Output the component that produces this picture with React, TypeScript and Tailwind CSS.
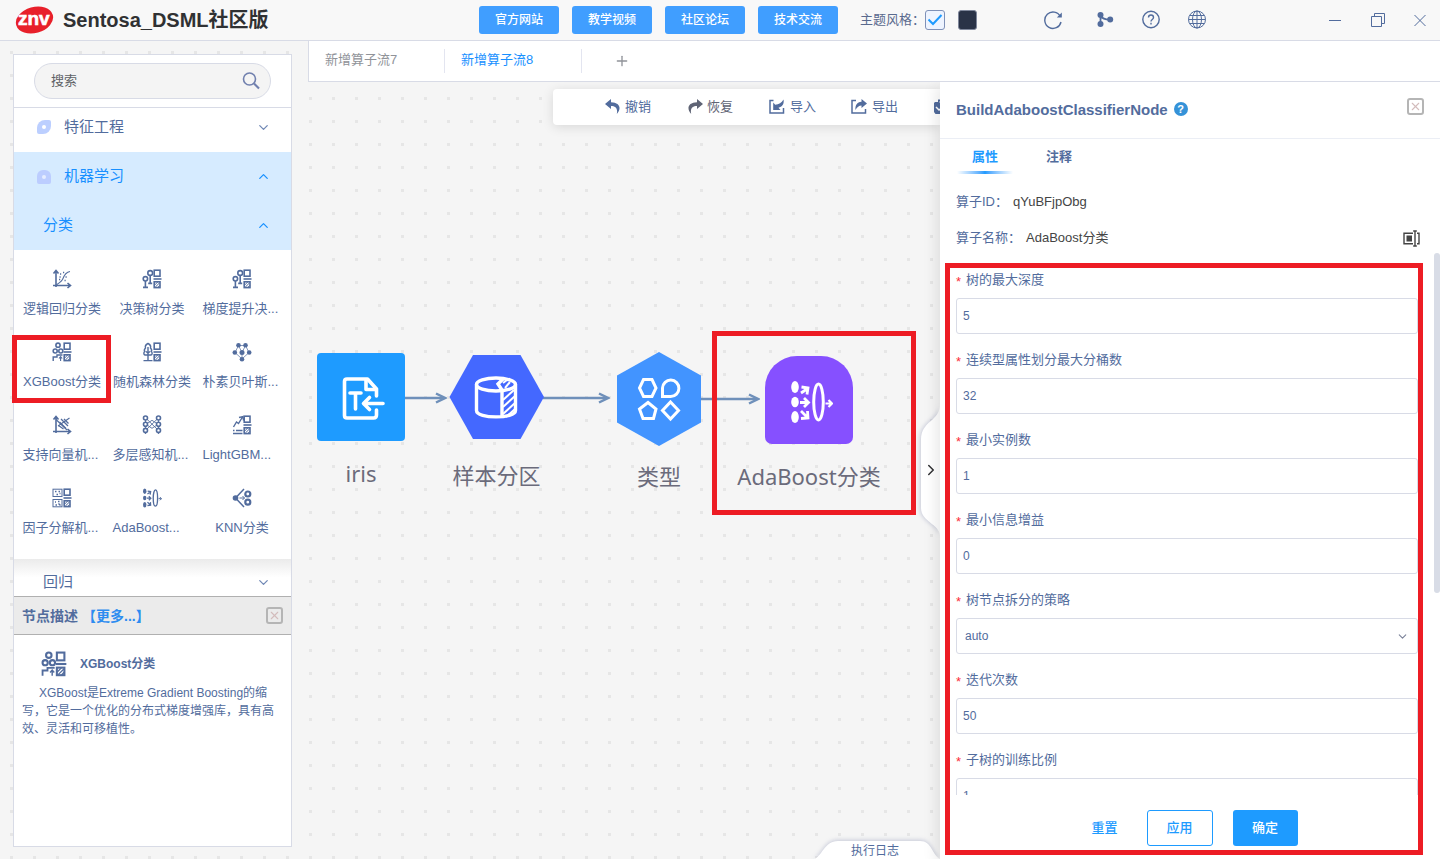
import type { ReactNode } from "react"
import { ChevronDown, ChevronRight, ChevronUp, Plus, X } from "lucide-react"

type IconProps = { className?: string }

const Svg = ({ className = "w-5 h-5", children }: { className?: string; children: ReactNode }) => (
  <svg viewBox="0 0 20 20" className={className} fill="none" stroke="currentColor" strokeWidth="1.4">
    {children}
  </svg>
)

// square, bar and hatched square used on the right side of several icons
const SplitMark = () => (
  <>
    <rect x="12.2" y="1.2" width="5.8" height="6" strokeWidth="1.6" />
    <path d="M11.5 10H19.500" strokeWidth="1.6" />
    <rect x="12.2" y="12.8" width="5.8" height="5.8" strokeWidth="1.6" />
    <path d="M12.5 16.2l3.2-3.2M13.2 18.2l4.4-4.4M15.8 18.4l2-2" strokeWidth="1" />
  </>
)

const LogisticIcon = ({ className }: IconProps) => (
  <Svg className={className}>
    <path d="M4 18V2M1.500 4.500L4 1.500l2.500 3M1 16.500h17M15.500 14l3 2.500-3 2.500" strokeWidth="1.6" />
    <path d="M4 16.500c3-3 5-3 6.500-6 1.500-4 3-7.500 7.500-8" strokeWidth="1.1" />
    <path d="M8 5h1.200M11 3.500h1.200M7.500 8h1.200M7 10.500h1.200M13.500 8h1.200M12.500 11.500h1.200" />
  </Svg>
)

const TreeIcon = ({ className }: IconProps) => (
  <Svg className={className}>
    <circle cx="3.4" cy="9.8" r="2.2" strokeWidth="1.6" />
    <circle cx="8.2" cy="4" r="2.4" strokeWidth="1.6" />
    <path d="M3.4 12v6M1 18.4h5M8.2 6.4v8M6.2 14.4h4" strokeWidth="1.6" />
    <SplitMark />
  </Svg>
)

const XgbIcon = ({ className }: IconProps) => (
  <Svg className={className}>
    <circle cx="6" cy="3.2" r="2.1" strokeWidth="1.6" />
    <circle cx="3.2" cy="9" r="2" strokeWidth="1.6" />
    <circle cx="8.8" cy="9" r="2" strokeWidth="1.6" />
    <path d="M1.2 19v-4H5v-2h5.5" />
    <path d="M8.6 19v-4M7 16.500l1.600-1.800 1.600 1.800" strokeWidth="1.1" />
    <SplitMark />
  </Svg>
)

const ForestIcon = ({ className }: IconProps) => (
  <Svg className={className}>
    <path d="M6 1.500C4 2.500 3 4.500 3.500 6 2.500 7 2 8.500 2.800 9.500 1.500 10.500 1.500 12.500 3 13h6c1.500-.5 1.500-2.500.2-3.500C10 8.500 9.500 7 8.500 6 9 4.500 8 2.500 6 1.500z" />
    <path d="M6 5v13.500M1.500 18.600h9M4 9.500l2 1.500 2-1.500" />
    <SplitMark />
  </Svg>
)

const BayesIcon = ({ className }: IconProps) => (
  <Svg className={className}>
    <path d="M6.5 3.5h7M6.5 3.5l3.5 7 3.5-7M10 10.5V17M6.5 3.5L3 10.5l7 6.5 7-6.5-3.500-7" strokeWidth="0.7" />
    <g fill="currentColor" stroke="none">
      <circle cx="6.5" cy="3.2" r="2.3" />
      <circle cx="13.5" cy="3.2" r="2.3" />
      <circle cx="2.8" cy="10.5" r="2.3" />
      <circle cx="10" cy="10.5" r="2.5" />
      <circle cx="17.2" cy="10.5" r="2.3" />
      <circle cx="10" cy="17.2" r="2.3" />
    </g>
  </Svg>
)

const SvmIcon = ({ className }: IconProps) => (
  <Svg className={className}>
    <path d="M4 18V2M1.500 4.500L4 1.500l2.500 3M1 16.500h17M15.500 14l3 2.500-3 2.500" strokeWidth="1.6" />
    <path d="M4 4.500L15 15M6 11l11.500-8" strokeWidth="1.1" />
    <path d="M9 4l7 7M7.500 7l6.500 6.500M12 4l4.500 4.500M6.500 10.500l5 3.500" strokeWidth="1.3" />
  </Svg>
)

const PerceptronIcon = ({ className }: IconProps) => (
  <Svg className={className}>
    <path d="M4 3.300L16 15M4 15L16 3.300M4 9.300l6-4 6 4-6 4zM3.500 3v16M16.500 3v16" strokeWidth="0.9" />
    <g fill="white" strokeWidth="1.6">
      <circle cx="3.5" cy="3" r="2" />
      <circle cx="3.5" cy="9.2" r="2" />
      <circle cx="3.5" cy="15.4" r="2" />
      <circle cx="16.5" cy="3" r="2" />
      <circle cx="16.5" cy="9.2" r="2" />
      <circle cx="16.5" cy="15.4" r="2" />
    </g>
  </Svg>
)

const LightGbmIcon = ({ className }: IconProps) => (
  <Svg className={className}>
    <path d="M1.500 12l3-5 2 1.500L10.500 2M7 2.500L11 1.500l.5 4M1 15.500h1.500M4 15.500h6.500M1 18.500h9.500" />
    <SplitMark />
  </Svg>
)

const FactorIcon = ({ className }: IconProps) => (
  <Svg className={className}>
    <rect x="1" y="1.2" width="9" height="7.3" strokeWidth="1" />
    <rect x="1" y="11.5" width="9" height="7.3" strokeWidth="1" />
    <path d="M3 3.500h1.500M6.500 3.500H8M4.500 6.500H6M7.500 5.500H8.500M3 14H4M6 13.500h1.500M3.500 17H5M6.500 15.500L8.500 17.500" />
    <SplitMark />
  </Svg>
)

const AdaIcon = ({ className }: IconProps) => (
  <svg viewBox="0 0 44 44" className={className ?? "w-5 h-5"} fill="none" stroke="currentColor" strokeWidth="2.8">
    <g fill="currentColor" stroke="none">
      <ellipse cx="6" cy="7" rx="3.8" ry="6" />
      <ellipse cx="6" cy="22" rx="3.8" ry="5.2" />
      <ellipse cx="6" cy="37" rx="3.8" ry="6" />
    </g>
    <path d="M12 13l6-4M12.500 7l6.500 1-1 6.500M11 22.500h7M15 18l4.500 4.500L15 27M12 31l6 6M18.500 31l.5 7-7 .5" />
    <ellipse cx="29.5" cy="22" rx="4.8" ry="18" strokeWidth="3" />
    <path d="M36.500 23.500h6M39.500 20l3.500 3.500-3.500 3.500" strokeWidth="2.2" />
  </svg>
)

const KnnIcon = ({ className }: IconProps) => (
  <Svg className={className}>
    <circle cx="3.5" cy="10" r="2.8" fill="currentColor" stroke="none" />
    <path d="M4 9.500L12 1M4 10.500L12 19" strokeWidth="1.5" />
    <path d="M7.500 10h5M10.500 8l2 2-2 2" strokeWidth="1" />
    <circle cx="15.8" cy="6" r="2.5" strokeWidth="2.2" />
    <circle cx="15.8" cy="14.2" r="2.5" strokeWidth="2.2" />
  </Svg>
)

const operators = [
  { name: "逻辑回归分类", Icon: LogisticIcon },
  { name: "决策树分类", Icon: TreeIcon },
  { name: "梯度提升决...", Icon: TreeIcon },
  { name: "XGBoost分类", Icon: XgbIcon, marked: true },
  { name: "随机森林分类", Icon: ForestIcon },
  { name: "朴素贝叶斯...", Icon: BayesIcon },
  { name: "支持向量机...", Icon: SvmIcon },
  { name: "多层感知机...", Icon: PerceptronIcon },
  { name: "LightGBM...", Icon: LightGbmIcon },
  { name: "因子分解机...", Icon: FactorIcon },
  { name: "AdaBoost...", Icon: AdaIcon },
  { name: "KNN分类", Icon: KnnIcon },
]

const params = [
  { id: "depth", label: "树的最大深度", value: "5" },
  { id: "bins", label: "连续型属性划分最大分桶数", value: "32" },
  { id: "instances", label: "最小实例数", value: "1" },
  { id: "gain", label: "最小信息增益", value: "0" },
  { id: "strategy", label: "树节点拆分的策略", value: "auto", select: true },
  { id: "iterations", label: "迭代次数", value: "50" },
  { id: "ratio", label: "子树的训练比例", value: "1" },
]

const CloseBox = () => (
  <button aria-label="关闭" className="flex h-[17px] w-[17px] items-center justify-center rounded-[3px] border-2 border-[#b5b5b5]">
    <X size={13} strokeWidth={2} className="shrink-0 text-[#d3bcbc]" />
  </button>
)

const Header = () => (
  <header className="flex h-[41px] shrink-0 items-center border-b border-[#d8dbe6] bg-[#f8f8f8]">
    <div className="flex w-[479px] shrink-0 items-center gap-2 pl-[15px]">
      <svg viewBox="0 0 40 30" className="h-[30px] w-10">
        <ellipse cx="19.5" cy="15" rx="19" ry="13" fill="#e8202a" transform="rotate(-16 19.500 15)" />
        <text x="3" y="20" fill="white" stroke="white" strokeWidth="0.6" fontFamily="Liberation Sans, sans-serif" fontSize="19" fontWeight="bold">
          znv
        </text>
      </svg>
      <h1 className="text-xl font-bold text-[#303133]">Sentosa_DSML社区版</h1>
    </div>
    <nav className="flex gap-[13px]">
      {["官方网站", "教学视频", "社区论坛", "技术交流"].map((item) => (
        <button key={item} className="h-7 w-20 rounded-[3px] bg-[#409eff] text-xs font-medium text-white">
          {item}
        </button>
      ))}
    </nav>
    <div className="ml-[22px] flex items-center">
      <label htmlFor="light" className="text-[13px] text-[#5a6a8e]">主题风格：</label>
      <span className="relative flex">
        <input
          id="light"
          type="checkbox"
          defaultChecked
          className="h-5 w-5 appearance-none rounded-[3px] border border-[#7f91b8] bg-[#eef4ff]"
        />
        <svg viewBox="0 0 20 20" className="pointer-events-none absolute inset-0" fill="none" stroke="#1e9bff" strokeWidth="2">
          <path d="M3.500 9.500l4.500 4.500 8.500-9" />
        </svg>
      </span>
      <button aria-label="深色" className="ml-[13px] h-5 w-[19px] rounded-[3px] border border-[#7f879b] bg-[#2a3347]" />
    </div>
    <div className="ml-auto flex items-center text-[#526c9d]">
      <button aria-label="刷新" className="mr-8">
        <Svg className="h-5 w-5">
          <path d="M17.300 6.500A8.200 8.200 0 1 0 18 12" />
          <path d="M18.800 2.500v5h-5z" fill="currentColor" stroke="none" />
        </Svg>
      </button>
      <button aria-label="流程" className="mr-[26px]">
        <Svg className="h-5 w-5">
          <g fill="currentColor" stroke="none">
            <circle cx="5.5" cy="5" r="3" />
            <circle cx="5.5" cy="14" r="3" />
            <circle cx="15.2" cy="9.5" r="3" />
          </g>
          <path d="M5.500 5v9.500M5.500 6c2 3 5 3.500 9 3.500" strokeWidth="1.8" />
        </Svg>
      </button>
      <button aria-label="帮助" className="mr-[26px]">
        <Svg className="h-5 w-5">
          <circle cx="10" cy="9.5" r="8.2" />
          <path d="M7.500 7.500c0-3.300 5-3.300 5 0 0 2-2.500 2-2.500 4M10 12.800v1.600" />
        </Svg>
      </button>
      <button aria-label="语言" className="mr-[118px]">
        <Svg className="h-5 w-5">
          <g strokeWidth="1">
            <circle cx="10" cy="9.5" r="8.5" />
            <ellipse cx="10" cy="9.5" rx="4.5" ry="8.5" />
            <path d="M10 1v17M1.500 9.500h17M3 5.500h14M3 13.500h14" />
          </g>
        </Svg>
      </button>
      <button aria-label="最小化" className="mr-[23px]">
        <Svg>
          <path d="M4 10.500h12" strokeWidth="1" />
        </Svg>
      </button>
      <button aria-label="还原" className="mr-[22px]">
        <Svg>
          <path d="M3.500 6.500h10v10h-10zM6.500 6.500v-3h10v10h-3" strokeWidth="1" />
        </Svg>
      </button>
      <button aria-label="退出" className="mr-[10px]">
        <Svg>
          <path d="M4.500 5l11 11M15.500 5l-11 11" strokeWidth="1" />
        </Svg>
      </button>
    </div>
  </header>
)

const Sidebar = () => (
  <aside className="mt-[13px] mb-3 ml-[13px] mr-4 flex w-[279px] shrink-0 flex-col border border-[#d8dbe6] bg-white text-[#526c9d]">
    <div className="border-b border-[#d8dbe6] px-5 py-2">
      <div className="flex h-9 items-center rounded-full border border-[#d8dbe6] bg-[#f4f4f4] pr-[10px] pl-4">
        <input aria-label="搜索" placeholder="搜索" className="min-w-0 flex-1 bg-transparent text-[13px] outline-none placeholder:text-[#606266]" />
        <svg viewBox="0 0 18 18" className="h-[18px] w-[18px]" fill="none" stroke="#7180ae" strokeWidth="1.6">
          <circle cx="7.5" cy="7" r="6" />
          <path d="M12 11.500l5 5" strokeWidth="2.2" />
        </svg>
      </div>
    </div>

    <button className="flex h-11 items-start pt-2 pr-5 pl-[23px] text-[15px] leading-[22px]">
      <span className="mt-1 flex h-[14px] w-[14px] items-center justify-center rounded-tl-[8px] rounded-tr-[2px] rounded-br-[8px] rounded-bl-[2px] bg-[#bccfff]">
        <i className="h-1 w-1 rounded-full bg-white" />
      </span>
      <span className="ml-[13px] flex-1 text-left">特征工程</span>
      <ChevronDown size={15} className="mt-1 text-[#7088b5]" />
    </button>
    <div className="bg-[#d6ebff] text-[#1890ff]">
      <button className="flex h-[49px] w-full items-center pr-5 pl-[23px] text-[15px]">
        <span className="flex h-[14px] w-[14px] items-center justify-center rounded-t-[6px] rounded-b-[2px] bg-[#bccdff]">
          <i className="h-1 w-1 rounded-full bg-[#e6edff]" />
        </span>
        <span className="ml-[13px] flex-1 text-left">机器学习</span>
        <ChevronUp size={15} />
      </button>
      <button className="flex h-[49px] w-full items-center pr-5 pl-[29px] text-[15px]">
        <span className="flex-1 text-left">分类</span>
        <ChevronUp size={15} />
      </button>
    </div>

    <div className="grid h-[309px] shrink-0 grid-cols-3 content-start pt-3 pr-1 pl-[3px]">
      {operators.map(({ name, Icon, marked }) => (
        <button key={name} className="relative flex h-[73px] flex-col items-center pt-[7px] text-[13px]">
          <Icon className="h-5 w-5" />
          <span className={`mt-[9px] w-[79px] leading-[21px] whitespace-nowrap ${name.endsWith("...") ? "text-left" : "text-center"}`}>
            {name}
          </span>
          {marked && <span className="absolute top-0 -left-[5px] h-[68px] w-[99px] border-[5px] border-[#ed1c24]" />}
        </button>
      ))}
    </div>
    <button className="flex h-[37px] shrink-0 items-center bg-linear-to-b from-[#ebebeb] to-white to-50% pt-[10px] pr-5 pl-[29px] text-[15px]">
      <span className="flex-1 text-left">回归</span>
      <ChevronDown size={15} className="text-[#7088b5]" />
    </button>

    <div className="flex h-[39px] shrink-0 items-center border-y border-[#b0b0b0] bg-[#ebebeb] px-2 text-sm font-bold">
      <h2>节点描述</h2>
      <a href="#more" className="ml-1 flex-1 text-[#2d8cf0]">【更多...】</a>
      <CloseBox />
    </div>
    <div className="flex-1 px-2 pt-4 text-xs">
      <div className="flex items-center gap-[13px] pl-[19px] font-bold">
        <XgbIcon className="h-[26px] w-[26px]" />
        XGBoost分类
      </div>
      <p className="mt-[7px] indent-[17px] leading-[18px]">
        XGBoost是Extreme Gradient Boosting的缩写，它是一个优化的分布式梯度增强库，具有高效、灵活和可移植性。
      </p>
    </div>
  </aside>
)

const Toolbar = () => (
  <div className="absolute top-[7px] right-0 left-[245px] flex h-9 items-center overflow-hidden rounded-l-[4px] bg-white pb-[2px] pl-[52px] text-[13px] whitespace-nowrap text-[#526c9d] shadow-[0_2px_12px_rgba(0,0,0,0.12)]">
    <button className="flex w-[82px] shrink-0 items-center gap-1">
      <svg viewBox="0 0 16 16" className="h-4 w-4" fill="currentColor">
        <path d="M6 1L0 6l6 5V8c4.500 0 7 2.500 5.800 8C16.500 11 15.500 4.500 6 4.200z" />
      </svg>
      撤销
    </button>
    <button className="flex w-[82px] shrink-0 items-center gap-1 text-[#5f6475]">
      <svg viewBox="0 0 16 16" className="h-4 w-4" fill="currentColor">
        <path d="M10 1l6 5-6 5V8c-4.500 0-7 2.500-5.800 8C-.5 11 .5 4.500 10 4.200z" />
      </svg>
      恢复
    </button>
    <button className="flex w-[82px] shrink-0 items-center gap-[5px]">
      <svg viewBox="0 0 16 16" className="h-4 w-4" fill="currentColor">
        <path d="M4.500 2.500H1V15h13.500V10" fill="none" stroke="currentColor" strokeWidth="1.5" />
        <path d="M4.200 4.500l2 2.200C10 6.500 12.500 5 14.500 1.500c1 4.500-1.500 7.500-5 8.200l2 2.300H4.200z" />
      </svg>
      导入
    </button>
    <button className="flex w-[82px] shrink-0 items-center gap-[5px]">
      <svg viewBox="0 0 16 16" className="h-4 w-4" fill="currentColor">
        <path d="M5 2.500H1V15h13.500V11" fill="none" stroke="currentColor" strokeWidth="1.5" />
        <path d="M10.500 1L16 5.500l-5.500 4.500V7.500C8 7.500 6 9 4.500 12 4 7.500 6 4 10.500 3.800z" />
      </svg>
      导出
    </button>
    <button aria-label="保存" className="shrink-0">
      <svg viewBox="0 0 16 16" className="h-4 w-4">
        <path d="M2 4h3V1.500h7V4h4v12H2.500L1 14V5z" fill="currentColor" />
        <path d="M3 9l3 3 6-5M6.500 4h4" fill="none" stroke="white" strokeWidth="1.5" />
      </svg>
    </button>
  </div>
)

const Arrow = ({ width }: { width: number }) => (
  <svg width={width} height="12" fill="none" stroke="#6f90ba" strokeWidth="2.5">
    <path d={`M0 6H${width - 3}`} />
    <path d={`M${width - 11} 1.500L${width - 2} 6l-9 4.500`} />
  </svg>
)

const Canvas = () => (
  <section className="relative min-w-0 flex-1 overflow-hidden font-['Noto_Sans','Noto_Sans_CJK_SC',sans-serif] text-[22px] leading-8 text-[#6b6b7b]">
    <div className="absolute top-[310px] left-[97px]"><Arrow width={42} /></div>
    <div className="absolute top-[310px] left-[235px]"><Arrow width={67} /></div>
    <div className="absolute top-[311px] left-[393px]"><Arrow width={59} /></div>

    <figure className="absolute top-[271px] left-[9px] flex w-[88px] flex-col items-center">
      <svg viewBox="0 0 88 88" className="h-[88px] w-[88px]" fill="none" stroke="white" strokeWidth="3.6" strokeLinecap="round" strokeLinejoin="round">
        <rect width="88" height="88" rx="4" fill="#1e9bff" stroke="none" />
        <path d="M59.500 43v-7L50.500 26H30c-2 0-2.500 1-2.500 2.500v34c0 2 1 2.500 2.500 2.500h26.500c2 0 3-1 3-3v-5" />
        <path d="M49 27v9.500h9" />
        <path d="M33 40h11M38.500 40v16" />
        <path d="M66 50.500H47M52.500 44.500l-6 6 6 6" />
      </svg>
      <figcaption className="mt-4">iris</figcaption>
    </figure>

    <figure className="absolute top-[273px] left-[141px] flex w-[95px] flex-col items-center">
      <svg viewBox="0 0 95 84" className="h-[84px] w-[95px]" fill="none" stroke="white" strokeWidth="3.4">
        <path d="M0.500 42L24 0h47.500L95 42 71.500 84H24z" fill="#4468ff" stroke="none" />
        <ellipse cx="47" cy="29.5" rx="19.5" ry="6.5" />
        <path d="M27.500 29.500v26c0 8.500 39 8.500 39 0v-26M53 35v27M53 35l-4-6 5-5" />
        <path d="M54 45l11-10M54 52l12-11M54 59l12-11M57 62l9-8M54 28l4-3M56 33l5-6" strokeWidth="2" />
      </svg>
      <figcaption className="mt-5 whitespace-nowrap">样本分区</figcaption>
    </figure>

    <figure className="absolute top-[270px] left-[309px] flex w-[84px] flex-col items-center">
      <svg viewBox="0 0 84 94" className="h-[94px] w-[84px]" fill="none" stroke="white" strokeWidth="3">
        <path d="M42 0l42 23.500v47L42 94 0 70.500v-47z" fill="#4294ff" stroke="none" />
        <path d="M26.500 27.500h8.500l4 8.500-4 8.500h-8.500l-4-8.500z" />
        <path d="M45.500 44.500V36a8.200 8.200 0 1 1 8.200 8.500z" />
        <path d="M31 50.500l8 6.500-2.500 9.500h-10.500L22.500 57z" />
        <path d="M53.500 50l8 8.500-8 8.500-8-8.500z" />
      </svg>
      <figcaption className="mt-[14px]">类型</figcaption>
    </figure>

    <figure className="absolute top-[249px] left-[404px] h-[184px] w-[204px] border-[5px] border-[#ed1c24]">
      <div className="flex flex-col items-center pt-5 pr-[10px]">
        <span className="flex h-[88px] w-[88px] items-center justify-center rounded-t-[32px] rounded-b-[7px] bg-[#8650ff] pt-1 pl-1 text-white">
          <AdaIcon className="h-11 w-11" />
        </span>
        <figcaption className="mt-4 whitespace-nowrap">AdaBoost分类</figcaption>
      </div>
    </figure>

    <Toolbar />

    <button aria-label="收起" className="absolute top-[320px] right-0 flex h-[136px] w-7 items-center justify-end text-[#303133]">
      <svg viewBox="0 0 28 136" className="absolute inset-0 drop-shadow-[-1px_0_2px_rgba(90,100,150,0.3)]" fill="white">
        <path d="M28 2C28 20 9 18 9 38v68c0 14 19 16 19 28z" />
      </svg>
      <ChevronRight size={18} className="relative" strokeWidth={2} />
    </button>
    <button className="absolute right-0 bottom-0 h-[18px] w-[126px] pr-1 text-xs leading-5 text-[#526c9d]">
      <svg viewBox="0 0 126 18" className="absolute inset-0 drop-shadow-[0_-1px_2px_rgba(90,100,150,0.3)]" fill="white">
        <path d="M0 18C8 16 10 0 24 0h82c12 0 12 14 20 18z" />
      </svg>
      <span className="relative">执行日志</span>
    </button>
  </section>
)

const PropertyPanel = () => (
  <section className="relative z-10 flex w-[500px] shrink-0 flex-col bg-white text-[13px] text-[#526c9d] shadow-[-3px_4px_14px_rgba(0,0,0,0.1)]">
    <header className="flex h-[57px] shrink-0 items-start border-b border-[#ebeef5] pt-4 pr-4 pl-4">
      <h2 className="text-[15px] leading-6 font-bold">BuildAdaboostClassifierNode</h2>
      <span className="mt-1 ml-[6px] flex h-[14px] w-[14px] items-center justify-center rounded-full bg-[#3592d8] text-[11px] leading-none font-bold text-white">
        ?
      </span>
      <span className="ml-auto"><CloseBox /></span>
    </header>
    <div className="flex h-[35px] shrink-0 gap-[18px] pl-[17px] font-bold">
      <button className="relative w-14 text-[#1e9bff]">
        属性
        <span className="absolute bottom-0 left-0 h-[3px] w-full bg-linear-to-r from-white via-[#1e9bff] to-white" />
      </button>
      <button className="w-14">注释</button>
    </div>
    <dl className="mt-[10px] shrink-0 px-4">
      <div className="flex h-9 items-center">
        <dt>算子ID：</dt>
        <dd className="ml-[5px] text-[#444]">qYuBFjpObg</dd>
      </div>
      <div className="flex h-9 items-center">
        <dt>算子名称：</dt>
        <dd className="ml-[5px] flex-1 text-[#444]">AdaBoost分类</dd>
        <button aria-label="重命名" className="mr-1 text-[#444]">
          <svg viewBox="0 0 17 17" className="h-[17px] w-[17px]" fill="none" stroke="currentColor" strokeWidth="1.4">
            <path d="M10 3.200H1v10.600h9M14 3.200h2v10.600h-2M12 1v15M10.200 1h3.600M10.200 16h3.600" />
            <rect x="3.5" y="5.5" width="5.5" height="6" fill="currentColor" stroke="none" />
          </svg>
        </button>
      </div>
    </dl>
    <form className="mt-1 min-h-0 flex-1 overflow-hidden pr-[22px] pl-4">
      {params.map((p) => (
        <div key={p.id} className="mb-[6px]">
          <label htmlFor={p.id} className="flex h-[38px] items-center pt-px">
            <span className="w-[10px] pt-1 text-red-500">*</span>
            {p.label}
          </label>
          {p.select ? (
            <div className="relative">
              <select id={p.id} className="block h-9 w-full appearance-none rounded-[3px] border border-[#d8dbe6] bg-white px-2 text-xs">
                <option>{p.value}</option>
              </select>
              <ChevronDown size={13} className="pointer-events-none absolute top-3 right-[9px] text-[#7b8299]" />
            </div>
          ) : (
            <input id={p.id} defaultValue={p.value} className="block h-9 w-full rounded-[3px] border border-[#d8dbe6] px-[6px] text-xs" />
          )}
        </div>
      ))}
    </form>
    <footer className="flex h-16 shrink-0 items-start justify-center pt-[15px] pl-[9px] font-medium">
      <button className="mr-[29px] h-9 text-[#1e9bff]">重置</button>
      <button className="mr-5 h-9 w-[66px] rounded-[3px] border border-[#1e9bff] text-[#1e9bff]">应用</button>
      <button className="h-9 w-[65px] rounded-[3px] bg-[#1e9bff] text-white">确定</button>
    </footer>
    <span className="absolute top-[171px] right-0 h-[340px] w-[6px] rounded-full bg-[#d8dce6]" />
    <div className="pointer-events-none absolute top-[181px] right-[17px] bottom-1 left-[5px] border-[5px] border-[#ed1c24]" />
  </section>
)

const App = () => {
  return (
    <div className="flex h-screen flex-col overflow-hidden bg-[#f5f5f5] font-['Liberation_Sans','Noto_Sans_CJK_SC',sans-serif]">
      <Header />
      <div className="flex min-h-0 flex-1 bg-[radial-gradient(circle,#e6e6e6_1.5px,transparent_2px)] bg-[length:23px_23px]">
        <Sidebar />
        <main className="flex min-w-0 flex-1 flex-col">
          <div className="relative z-20 flex h-[41px] shrink-0 border-b border-l border-[#d8dbe6] bg-white text-[13px]">
            <button className="flex w-[135px] items-center pb-[2px] pl-4 text-[#909399]">新增算子流7</button>
            <span className="my-2 w-px bg-[#e3e5f0]" />
            <button className="flex w-[136px] items-center pb-[2px] pl-4 text-[#1890ff]">新增算子流8</button>
            <span className="my-2 w-px bg-[#e3e5f0]" />
            <button aria-label="新增" className="ml-8 text-[#909399]">
              <Plus size={16} strokeWidth={2} />
            </button>
          </div>
          <div className="flex min-h-0 flex-1">
            <Canvas />
            <PropertyPanel />
          </div>
        </main>
      </div>
    </div>
  )
}

export default App
